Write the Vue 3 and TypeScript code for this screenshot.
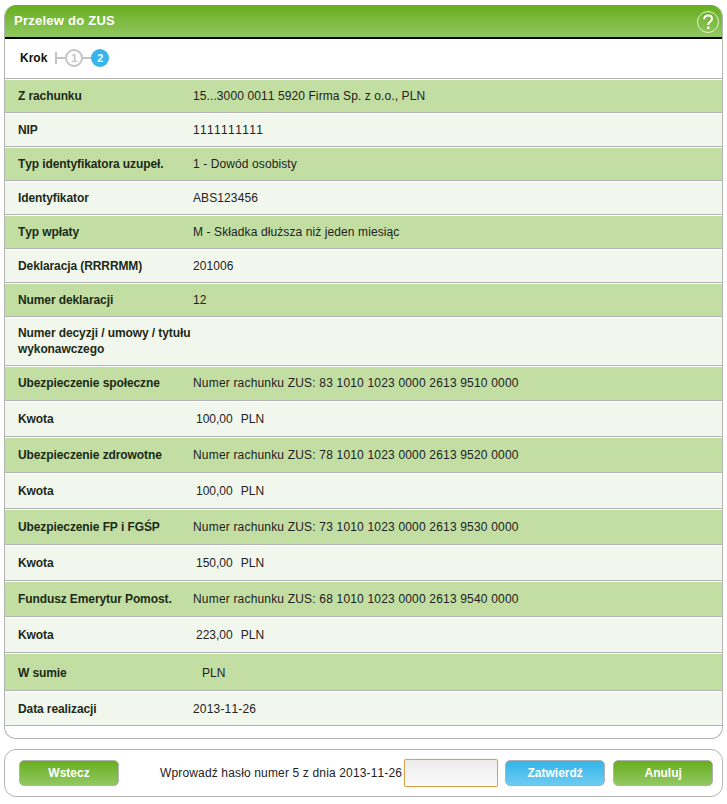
<script setup lang="ts">
interface Row { label: string; value: string; cls: string; amount?: boolean }
const rows: Row[] = [
  { label: 'Z rachunku', value: '15...3000 0011 5920 Firma Sp. z o.o., PLN', cls: 'h34' },
  { label: 'NIP', value: '1111111111', cls: 'h34 wide' },
  { label: 'Typ identyfikatora uzupeł.', value: '1 - Dowód osobisty', cls: 'h34' },
  { label: 'Identyfikator', value: 'ABS123456', cls: 'h34' },
  { label: 'Typ wpłaty', value: 'M - Składka dłuższa niż jeden miesiąc', cls: 'h34' },
  { label: 'Deklaracja (RRRRMM)', value: '201006', cls: 'h34' },
  { label: 'Numer deklaracji', value: '12', cls: 'h34' },
  { label: 'Numer decyzji / umowy / tytułu wykonawczego', value: '', cls: 'h49 lift' },
  { label: 'Ubezpieczenie społeczne', value: 'Numer rachunku ZUS: 83 1010 1023 0000 2613 9510 0000', cls: 'h35 lift acct' },
  { label: 'Kwota', value: '100,00', cls: 'h36', amount: true },
  { label: 'Ubezpieczenie zdrowotne', value: 'Numer rachunku ZUS: 78 1010 1023 0000 2613 9520 0000', cls: 'h36 acct' },
  { label: 'Kwota', value: '100,00', cls: 'h36', amount: true },
  { label: 'Ubezpieczenie FP i FGŚP', value: 'Numer rachunku ZUS: 73 1010 1023 0000 2613 9530 0000', cls: 'h36 acct' },
  { label: 'Kwota', value: '150,00', cls: 'h36', amount: true },
  { label: 'Fundusz Emerytur Pomost.', value: 'Numer rachunku ZUS: 68 1010 1023 0000 2613 9540 0000', cls: 'h36 acct' },
  { label: 'Kwota', value: '223,00', cls: 'h36', amount: true },
  { label: 'W sumie', value: '', cls: 'h38 total', amount: true },
  { label: 'Data realizacji', value: '2013-11-26', cls: 'h35 acct' },
]
</script>

<template>
  <div class="page">
    <section class="card">
      <header class="head">
        <h1>Przelew do ZUS</h1>
        <svg class="help" width="24" height="24" viewBox="0 0 24 24" aria-label="Pomoc">
          <circle cx="12" cy="12" r="10.5" fill="none" stroke="#e4f0d0" stroke-width="1" />
          <path d="M8.2 9.2 C8.2 6.8 10 5.4 12.2 5.4 C14.5 5.4 16 6.9 16 8.8 C16 10.4 15 11.2 13.9 12 C12.8 12.8 12.2 13.5 12.2 15" fill="none" stroke="#fff" stroke-width="2" />
          <rect x="11" y="16.6" width="2.4" height="2.4" fill="#fff" />
        </svg>
      </header>
      <div class="steps">
        <span class="krok">Krok</span>
        <span class="tick"></span>
        <span class="line"></span>
        <span class="dot done">1</span>
        <span class="line"></span>
        <span class="dot now">2</span>
      </div>
      <div class="rows">
        <div v-for="(r, i) in rows" :key="i" class="row" :class="[r.cls, i % 2 ? 'even' : 'odd']">
          <div class="label">{{ r.label }}</div>
          <div class="value" :class="{ amt: r.amount }">
            <template v-if="r.amount"><span class="num">{{ r.value }}</span><span>PLN</span></template>
            <template v-else>{{ r.value }}</template>
          </div>
        </div>
      </div>
    </section>
    <footer class="foot">
      <button class="btn green back">Wstecz</button>
      <span class="prompt">Wprowadź hasło numer 5 z dnia 2013-11-26</span>
      <input class="pass" type="text" />
      <button class="btn blue ok">Zatwierdź</button>
      <button class="btn green cancel">Anuluj</button>
    </footer>
  </div>
</template>

<style>
html, body { margin: 0; background: #fff; }
</style>

<style scoped>
.page {
  width: 727px;
  height: 804px;
  box-sizing: border-box;
  padding: 5px 4px 0 4px;
  font-family: "Liberation Sans", Arial, sans-serif;
  font-size: 12px;
  font-kerning: none;
  color: #1a1a1a;
}
.card {
  box-sizing: border-box;
  height: 734px;
  border: 1px solid #b4b4b4;
  border-top: 0;
  border-radius: 12px;
  overflow: hidden;
}
.head {
  height: 32px;
  border-bottom: 2px solid #000;
  background: linear-gradient(#66ae1e, #92c862);
  display: flex;
  align-items: center;
  justify-content: space-between;
  padding: 0 2px 0 9px;
}
h1 {
  margin: 0 0 2px;
  font-size: 13px;
  letter-spacing: 0.25px;
  font-weight: bold;
  color: #fff;
}
.help { display: block; margin-top: 1px; }
.steps {
  height: 40px;
  box-sizing: border-box;
  border-bottom: 1px solid #b4b4b4;
  display: flex;
  align-items: center;
  padding-left: 15px;
  padding-bottom: 1px;
}
.krok { font-weight: bold; color: #111; margin-right: 8px; }
.tick { width: 2px; height: 12px; background: #c4c4c4; }
.line { width: 8px; height: 2px; background: #c4c4c4; }
.dot {
  box-sizing: border-box;
  width: 18px;
  height: 18px;
  border-radius: 50%;
  display: flex;
  align-items: center;
  justify-content: center;
  font-size: 11px;
  font-weight: bold;
}
.done { border: 2px solid #c4c4c4; color: #c4c4c4; background: #fff; }
.now { background: #35b5ea; color: #fff; }
.row {
  box-sizing: border-box;
  display: flex;
  align-items: center;
  padding-left: 13px;
  border-bottom: 1px solid #b4b4b4;
  border-top: 1px solid #fff;
}
.odd { background: #c2dea3; }
.even { background: #f1f7ec; }
.h34 { height: 34px; }
.h35 { height: 35px; }
.h36 { height: 36px; }
.h38 { height: 38px; }
.h49 { height: 49px; }
.lift { padding-bottom: 2px; }
.label {
  width: 175px;
  flex: none;
  font-weight: bold;
  letter-spacing: -0.1px;
  color: #1d2a17;
  line-height: 16px;
}
.value { color: #222; letter-spacing: 0.1px; }
.acct .value { letter-spacing: 0.18px; }
.wide .value { letter-spacing: 0.35px; }
.amt { display: flex; gap: 8px; padding-left: 3px; letter-spacing: 0; }
.total { padding-top: 2px; }
.total .amt { gap: 6px; }
.foot {
  box-sizing: border-box;
  margin-top: 10px;
  height: 48px;
  border: 1px solid #b4b4b4;
  border-radius: 12px;
  display: flex;
  align-items: center;
  padding: 0 9px 0 14px;
}
.btn {
  box-sizing: border-box;
  flex: none;
  height: 26px;
  border: 1px solid #b0b0b0;
  border-radius: 5px;
  color: #fff;
  font: bold 12px "Liberation Sans", Arial, sans-serif;
  padding: 0;
}
.green { background: linear-gradient(#66ae1e, #92c862); }
.blue { background: linear-gradient(#35b5ea, #6ccbf1); }
.back { width: 100px; margin-right: 41px; }
.prompt { color: #222; margin-right: 2px; letter-spacing: 0.15px; white-space: nowrap; flex: none; }
.pass {
  box-sizing: border-box;
  flex: none;
  width: 94px;
  height: 28px;
  border: 1px solid #dfa145;
  border-radius: 2px;
  box-shadow: 0 0 1px #e8b870;
  background: linear-gradient(#ececec, #fbfbfb);
  margin-right: 7px;
  padding: 0;
}
.ok { width: 100px; margin-right: 8px; }
.cancel { width: 100px; }
</style>
